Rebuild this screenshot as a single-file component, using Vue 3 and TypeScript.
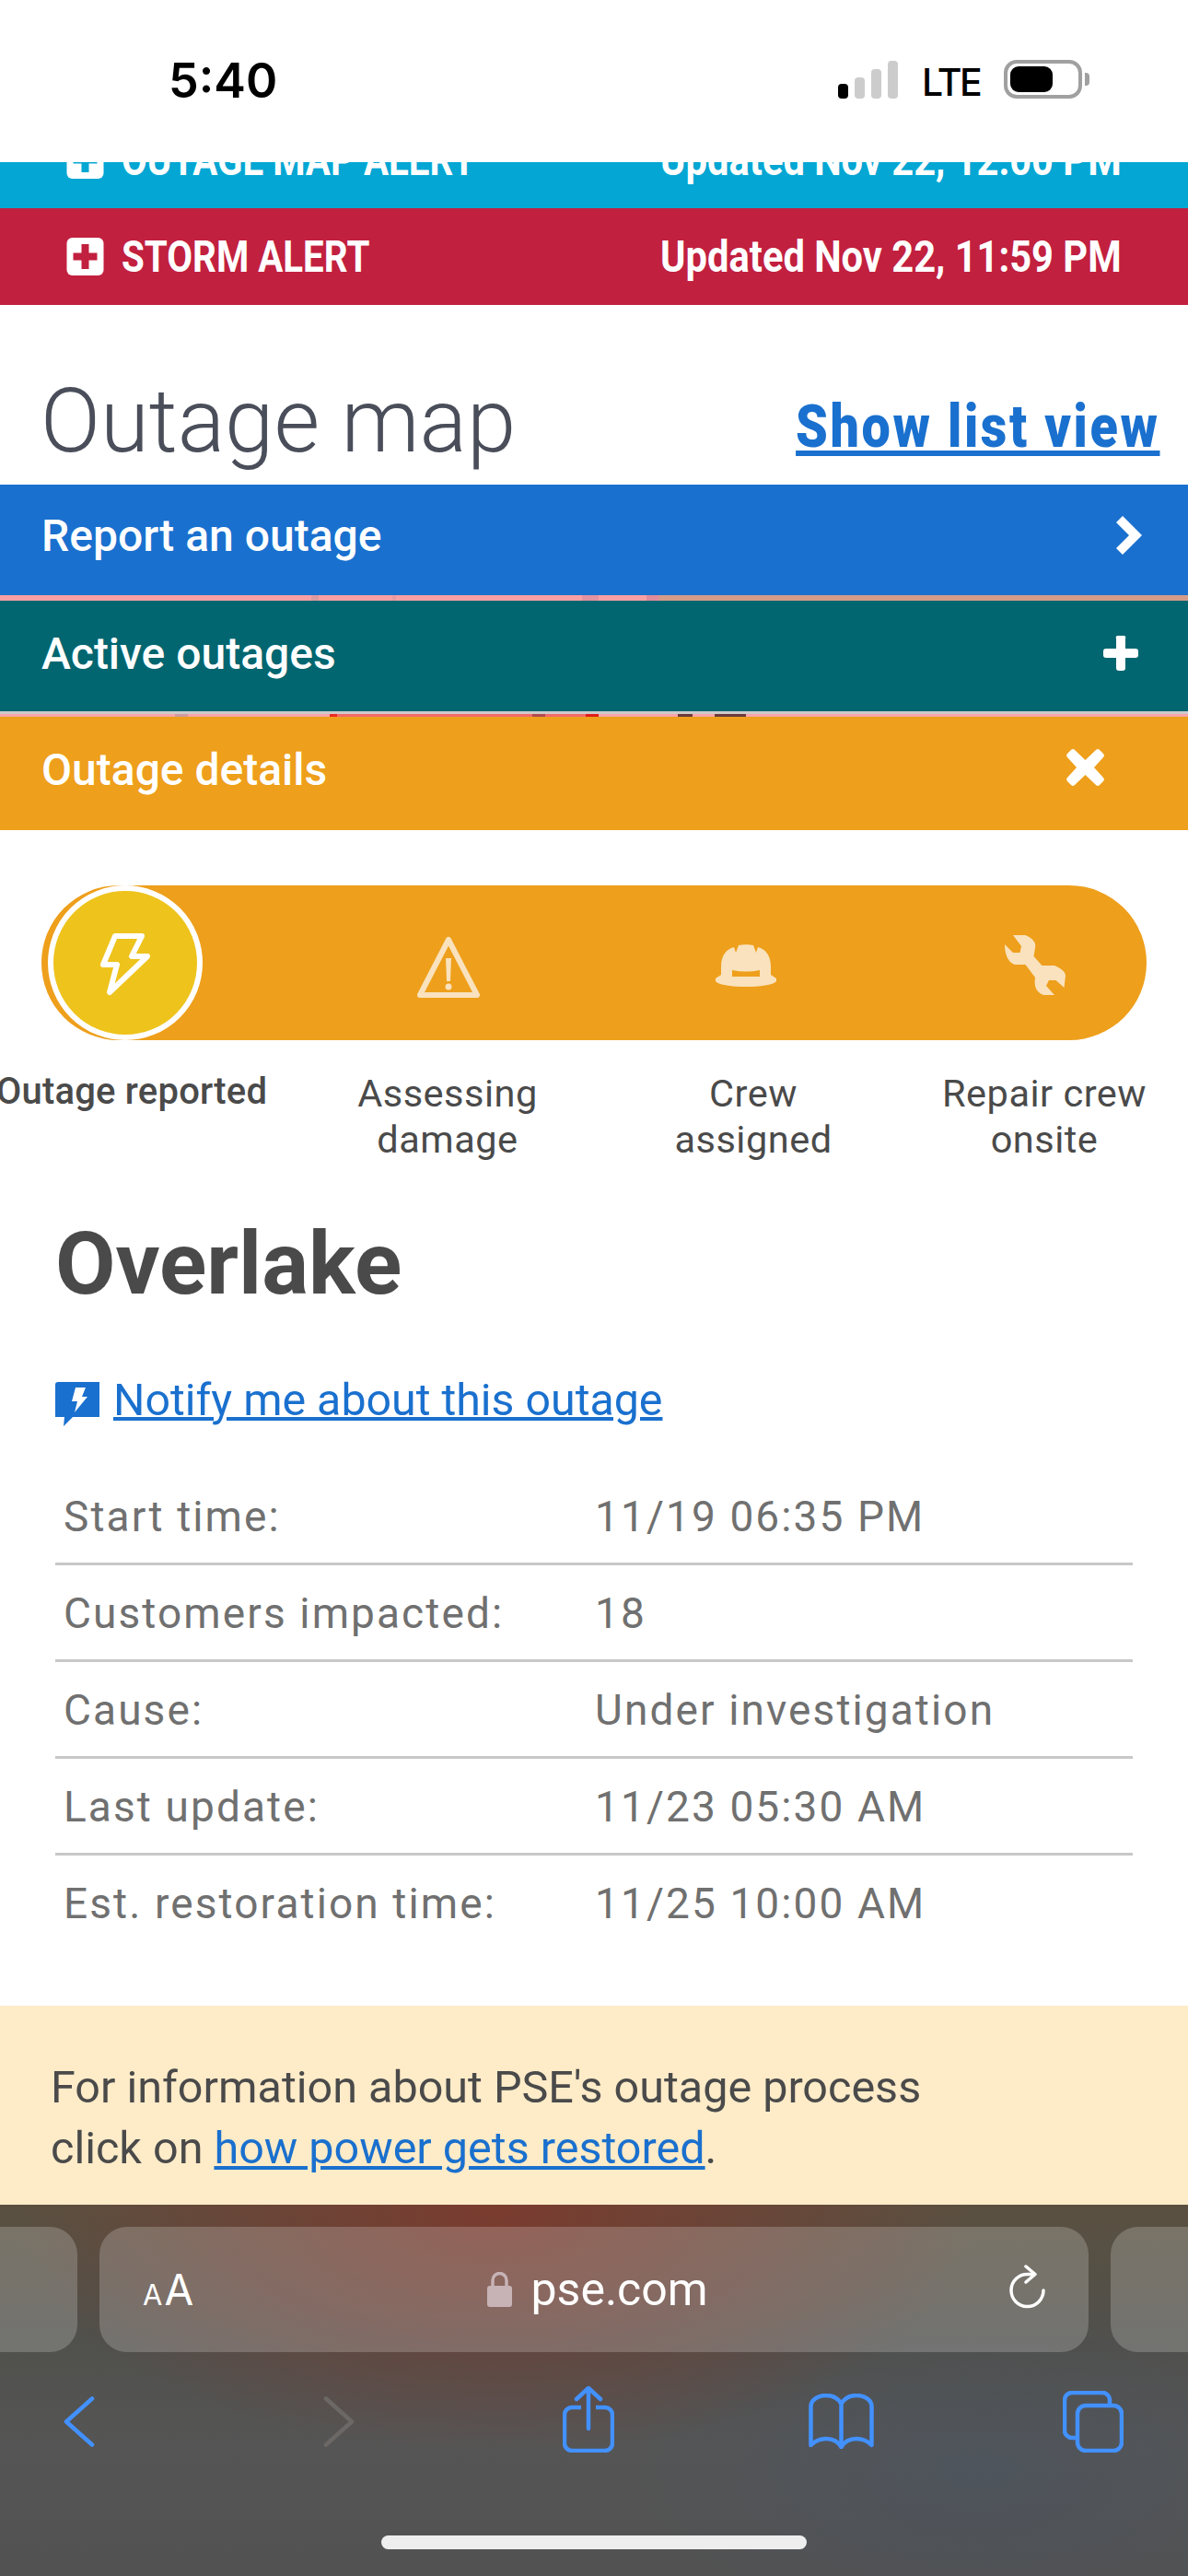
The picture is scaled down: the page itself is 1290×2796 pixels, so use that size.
<template>
  <div class="page">
    <header class="status">
      <span class="time">5:40</span>
      <div class="signal">
        <i class="sig s1 on"></i><i class="sig s2"></i><i class="sig s3"></i><i class="sig s4"></i>
      </div>
      <span class="lte">LTE</span>
      <div class="battery"><i class="charge"></i></div>
      <i class="nub"></i>
    </header>

    <div class="alert-clip">
      <div class="alert cyan">
        <div class="alert-left">
          <svg class="alert-icon" viewBox="0 0 40 41"><rect width="40" height="41" rx="6" fill="#fff" /><path d="M16 7h8v9.500h9v8h-9V34h-8v-9.500H7v-8h9z" fill="#04a6d3" /></svg>
          <span class="alert-name">OUTAGE MAP ALERT</span>
        </div>
        <span class="alert-date">Updated Nov 22, 12:00 PM</span>
      </div>
    </div>
    <div class="alert red">
      <div class="alert-left">
        <svg class="alert-icon" viewBox="0 0 40 41"><rect width="40" height="41" rx="6" fill="#fff" /><path d="M16 7h8v9.500h9v8h-9V34h-8v-9.500H7v-8h9z" fill="#c2203f" /></svg>
        <span class="alert-name">STORM ALERT</span>
      </div>
      <span class="alert-date">Updated Nov 22, 11:59 PM</span>
    </div>

    <div class="title-row">
      <h1 class="title">Outage map</h1>
      <a class="list-link">Show list view</a>
    </div>

    <div class="bar blue">
      <span>Report an outage</span>
      <svg class="chev" viewBox="0 0 28 42"><path d="M7 0l21 21L7 42l-7-7 14-14L0 7z" fill="#fff" /></svg>
    </div>
    <div class="sliver-a"></div>
    <div class="bar teal">
      <span>Active outages</span>
      <svg class="plus" viewBox="0 0 38 38"><path d="M14 3a2 2 0 0 1 2-3h6a2 2 0 0 1 2 3v11h11a3 3 0 0 1 3 3v4a3 3 0 0 1-3 3H24v11a3 3 0 0 1-3 3h-4a3 3 0 0 1-3-3V24H3a3 3 0 0 1-3-3v-4a3 3 0 0 1 3-3h11z" fill="#fff" /></svg>
    </div>
    <div class="sliver-b"><i></i></div>
    <div class="bar amber">
      <span>Outage details</span>
      <svg class="close" viewBox="0 0 41 40"><path d="M9 1l11.500 11L32 1a3 3 0 0 1 4 0l4 4a3 3 0 0 1 0 4L30 20l10 11a3 3 0 0 1 0 4l-4 4a3 3 0 0 1-4 0L20.500 28 9 39a3 3 0 0 1-4 0l-4-4a3 3 0 0 1 0-4l10-11L1 9a3 3 0 0 1 0-4l4-4a3 3 0 0 1 4 0z" fill="#fff" /></svg>
    </div>

    <section class="steps">
      <div class="pill">
        <div class="current">
          <svg class="bolt" viewBox="0 0 54 68"><path d="M16 3h29L34 25h17L10 64l8-30H3z" fill="none" stroke="#fff" stroke-width="6" stroke-linejoin="round" /></svg>
        </div>
        <svg class="step-icon warn" viewBox="0 0 70 68">
          <path d="M35 5l31 60H4z" fill="none" stroke="#f9e2bd" stroke-width="6" stroke-linejoin="round" />
          <path d="M32 25h6l-1 25h-4z" fill="#f9e2bd" />
          <circle cx="35" cy="56" r="3.500" fill="#f9e2bd" />
        </svg>
        <svg class="step-icon helmet" viewBox="0 0 66 46">
          <path fill-rule="evenodd" d="M6 33V24C6 12 12 5 20 3l2 6 3-8c4-1 12-1 16 0l3 8 2-6c8 2 14 9 14 21v9l6 4v3c-3 4-18 6-33 6S3 44 0 40v-3zm12-5v7h30v-7c-10 2-20 2-30 0z" fill="#f9e2bd" />
        </svg>
        <svg class="step-icon wrench" viewBox="0 0 66 66">
          <path d="M9 0h13.500c7.500 3 12 8 10.500 14l-1.500 9 9 10h13.500c7.500 3 12 7 12 11l-1.500 13-9-8h-7.500l-3 6 9 10h-12c-7.500-3-10.500-9-9-19L22.500 32H10.500C3 29 0 20 0 10l9 9h7.500l1.500-7z" fill="#f9e2bd" />
        </svg>
      </div>

      <div class="labels">
        <span class="label first">Outage reported</span>
        <span class="label">Assessing<br />damage</span>
        <span class="label">Crew<br />assigned</span>
        <span class="label">Repair crew<br />onsite</span>
      </div>
    </section>

    <section class="details">
      <h2 class="place">Overlake</h2>
      <div class="notify">
        <svg class="notify-icon" viewBox="0 0 48 48">
          <path d="M3 0h45v38H19L9 48l1-10H0V3a3 3 0 0 1 3-3z" fill="#1a70ce" />
          <path d="M22 6h11l-4 10h6L21 33l3-12h-6z" fill="#fff" />
        </svg>
        <a class="notify-link">Notify me about this outage</a>
      </div>
      <div class="facts">
        <div v-for="row in facts" :key="row.name" class="fact">
          <span class="fact-name">{{ row.name }}</span>
          <span class="fact-value">{{ row.value }}</span>
        </div>
      </div>
    </section>

    <div class="notice">
      For information about PSE's outage process<br />
      click on <a class="notice-link">how power gets restored</a>.
    </div>

    <footer class="browser">
      <div class="tabs">
        <div class="tab side-left"></div>
        <div class="tab address">
          <span class="aa"><small>A</small>A</span>
          <div class="host">
            <svg class="lock" viewBox="0 0 27 38">
              <path d="M6 17V9a7.500 7.500 0 0 1 15 0v8" fill="none" stroke="#c7b3b6" stroke-width="3.500" />
              <rect y="15" width="27" height="23" rx="3" fill="#c7b3b6" />
            </svg>
            <span>pse.com</span>
          </div>
          <svg class="reload" viewBox="0 0 44 54">
            <path d="M37 28a17.500 17.500 0 1 1-17-17.500h7" fill="none" stroke="#fff" stroke-width="3.500" stroke-linecap="round" />
            <path d="M18 2l10 8.500L18 19" fill="none" stroke="#fff" stroke-width="3.500" stroke-linecap="round" stroke-linejoin="round" />
          </svg>
        </div>
        <div class="tab side-right"></div>
      </div>
      <nav class="tools">
        <svg class="tool back" viewBox="0 0 34 55"><path d="M31 2.500L3 27.500l28 25" fill="none" stroke="#4291ff" stroke-width="4.500" stroke-linecap="round" stroke-linejoin="round" /></svg>
        <svg class="tool forward" viewBox="0 0 34 55"><path d="M3 2.500l28 25-28 25" fill="none" stroke="#6b6866" stroke-width="4.500" stroke-linecap="round" stroke-linejoin="round" /></svg>
        <svg class="tool share" viewBox="0 0 56 72">
          <path d="M20 23h-10a8 8 0 0 0-8 8v31a8 8 0 0 0 8 8h36a8 8 0 0 0 8-8V31a8 8 0 0 0-8-8H36" fill="none" stroke="#4291ff" stroke-width="4.500" />
          <path d="M28 46V3M15 14L28 2l13 12" fill="none" stroke="#4291ff" stroke-width="4.500" stroke-linecap="round" stroke-linejoin="round" />
        </svg>
        <svg class="tool book" viewBox="0 0 71 60">
          <path d="M35.500 11C32 5 26 2 19 2 10 2 2.500 7 2.500 14v42c5-5 11-7 16.500-7 7 0 13 3 16.500 9 3.500-6 9.500-9 16.500-9 5.500 0 11.500 2 16.500 7V14c0-7-7.500-12-16.500-12-7 0-13 3-16.500 9zm0 0v47" fill="none" stroke="#4291ff" stroke-width="4.500" stroke-linejoin="round" />
        </svg>
        <svg class="tool pages" viewBox="0 0 66 67">
          <path d="M16 51H10a8 8 0 0 1-8-8V10a8 8 0 0 1 8-8h33a8 8 0 0 1 8 8v6" fill="none" stroke="#4291ff" stroke-width="4.500" />
          <rect x="16" y="16" width="48" height="49" rx="9" fill="none" stroke="#4291ff" stroke-width="4.500" />
        </svg>
      </nav>
      <div class="home"></div>
    </footer>
  </div>
</template>

<script setup lang="ts">
interface Fact {
  name: string
  value: string
}

const facts: Fact[] = [
  { name: 'Start time:', value: '11/19 06:35 PM' },
  { name: 'Customers impacted:', value: '18' },
  { name: 'Cause:', value: 'Under investigation' },
  { name: 'Last update:', value: '11/23 05:30 AM' },
  { name: 'Est. restoration time:', value: '11/25 10:00 AM' }
]
</script>

<style>
html,
body {
  margin: 0;
  background: #fff;
}
</style>

<style scoped>
.page {
  width: 1290px;
  height: 2796px;
  overflow: hidden;
  display: flex;
  flex-direction: column;
  font-family: Roboto, "Liberation Sans", sans-serif;
  background: #fff;
}

/* status bar */
.status {
  height: 176px;
  flex: none;
  display: flex;
  align-items: flex-start;
  padding-left: 183px;
  box-sizing: border-box;
}

.time {
  margin-top: 58px;
  font-family: Inter, sans-serif;
  font-size: 52px;
  line-height: 60px;
  font-weight: 600;
  color: #000;
  width: 727px;
}

.signal {
  display: flex;
  gap: 7px;
  align-items: flex-end;
  height: 41px;
  margin-top: 66px;
}

.sig {
  width: 11px;
  border-radius: 4px;
  background: #ccc;
}

.sig.on {
  background: #000;
}

.s1 { height: 16px; }
.s2 { height: 23px; }
.s3 { height: 32px; }
.s4 { height: 41px; }

.lte {
  margin: 64px 0 0 26px;
  font-family: Inter, sans-serif;
  font-size: 41px;
  line-height: 50px;
  font-weight: 500;
  letter-spacing: -2.500px;
  color: #000;
  width: 62px;
}

.battery {
  margin: 65px 0 0 27px;
  width: 85px;
  height: 42px;
  box-sizing: border-box;
  border: 4px solid #a0a0a0;
  border-radius: 14px;
  padding: 3px;
}

.charge {
  display: block;
  width: 46px;
  height: 28px;
  border-radius: 9px;
  background: #000;
}

.nub {
  margin: 79px 0 0 3px;
  width: 5px;
  height: 14px;
  border-radius: 0 4px 4px 0;
  background: #a0a0a0;
}

/* alerts */
.alert-clip {
  height: 50px;
  flex: none;
  overflow: hidden;
  display: flex;
  flex-direction: column;
  justify-content: flex-end;
}

.alert {
  height: 105px;
  flex: none;
  display: flex;
  align-items: center;
  justify-content: space-between;
  padding: 0 72px 0 72px;
  color: #fff;
  font-weight: 700;
  font-size: 48px;
}

.cyan {
  background: #04a6d3;
}

.red {
  background: #c2203f;
}

.alert-left {
  display: flex;
  align-items: center;
  gap: 19px;
}

.alert-icon {
  width: 41px;
  height: 41px;
  flex: none;
}

.alert-name,
.alert-date {
  display: inline-block;
  white-space: nowrap;
}

/* the site uses a condensed face here */
.alert-name {
  transform: scaleX(0.84);
  transform-origin: left center;
}

.alert-date {
  transform: scaleX(0.868);
  transform-origin: right center;
}

/* heading */
.title-row {
  height: 195px;
  flex: none;
  display: flex;
  align-items: flex-end;
  justify-content: space-between;
  padding: 0 31px 0 44px;
  box-sizing: border-box;
}

.title {
  margin: 0 0 14px;
  font-size: 96px;
  line-height: 110px;
  font-weight: 300;
  color: #4a4e5a;
}

.list-link {
  display: inline-block;
  margin-bottom: 24px;
  font-size: 64px;
  line-height: 76px;
  font-weight: 900;
  letter-spacing: 3px;
  color: #1a70ce;
  text-decoration: underline;
  transform: scaleX(0.87);
  transform-origin: right center;
}

/* bars */
.bar {
  height: 120px;
  flex: none;
  box-sizing: border-box;
  display: flex;
  align-items: center;
  justify-content: space-between;
  padding: 0 50px 8px 45px;
  color: #fff;
  font-size: 48px;
  font-weight: 500;
}

.blue {
  background: #1a70ce;
  padding-bottom: 10px;
}

.teal {
  background: #016670;
  padding-bottom: 6px;
}

.amber {
  height: 123px;
  background: #ee9f1b;
  padding-right: 91px;
}

.chev {
  width: 28px;
  height: 42px;
}

.plus {
  width: 38px;
  height: 38px;
  margin-right: 4px;
}

.close {
  width: 41px;
  height: 40px;
  margin-bottom: 6px;
}

.sliver-a {
  height: 6px;
  flex: none;
  background: linear-gradient(
    to right,
    #f8a0a3 338px,
    #dc9aa0 338px,
    #dc9aa0 346px,
    #f8a0a3 346px,
    #f8a0a3 426px,
    #e89aa0 426px,
    #e89aa0 430px,
    #f8a0a3 430px,
    #f8a0a3 632px,
    #e292a0 632px,
    #e292a0 650px,
    #f8a0a3 650px,
    #f8a0a3 702px,
    #e08c9a 702px,
    #e08c9a 716px,
    #d49c88 716px
  );
}

.sliver-b {
  height: 6px;
  flex: none;
  background: #cfcaca;
  padding-top: 3px;
  box-sizing: border-box;
}

.sliver-b i {
  display: block;
  height: 3px;
  background: linear-gradient(
    to right,
    #f8a5a8 190px,
    #d09aa0 190px,
    #d09aa0 204px,
    #f8a5a8 204px,
    #f8a5a8 358px,
    #ee2a22 358px,
    #ee2a22 366px,
    #f36a6a 366px,
    #f36a6a 578px,
    #b04a50 578px,
    #b04a50 592px,
    #f36a6a 592px,
    #f36a6a 636px,
    #e01e1a 636px,
    #e01e1a 650px,
    #f8a5a8 650px,
    #f8a5a8 736px,
    #6b3a3a 736px,
    #6b3a3a 752px,
    #f8a5a8 752px,
    #f8a5a8 776px,
    #6b3a3a 776px,
    #6b3a3a 810px,
    #f8a5a8 810px
  );
}

/* status steps */
.steps {
  flex: none;
  padding: 60px 45px 0;
}

.pill {
  width: 1200px;
  height: 168px;
  box-sizing: border-box;
  border-radius: 84px;
  background: #ee9f1b;
  padding-left: 7px;
  display: flex;
  align-items: center;
}

.current {
  width: 168px;
  height: 168px;
  flex: none;
  box-sizing: border-box;
  border: 6px solid #fff;
  border-radius: 50%;
  background: #eec31c;
  display: flex;
  align-items: center;
  justify-content: center;
}

.bolt {
  width: 54px;
  height: 68px;
  margin-top: 4px;
}

.step-icon {
  flex: none;
}

.warn {
  width: 70px;
  height: 68px;
  margin-left: 232px;
  margin-top: 8px;
}

.helmet {
  width: 66px;
  height: 46px;
  margin-left: 255px;
  margin-top: 6px;
}

.wrench {
  width: 66px;
  height: 66px;
  margin-left: 248px;
  margin-top: 6px;
}

.labels {
  display: grid;
  grid-template-columns: 296px 390px 274px 358px;
  margin: 33px 0 0 -50px;
  width: 1320px;
}

.label {
  font-size: 41.500px;
  line-height: 50px;
  letter-spacing: 0.500px;
  color: #4a4a4a;
  text-align: center;
  white-space: nowrap;
}

.first {
  font-size: 40px;
  font-weight: 500;
  letter-spacing: 0.2px;
  margin-top: -2px;
}

/* outage details */
.details {
  flex: none;
  padding: 0 60px;
}

.place {
  margin: 55px 0 0 0;
  font-size: 95px;
  line-height: 110px;
  font-weight: 700;
  color: #4a4a4a;
}

.notify {
  display: flex;
  align-items: center;
  gap: 15px;
  margin-top: 63px;
  height: 60px;
}

.notify-icon {
  width: 48px;
  height: 48px;
  flex: none;
  margin-top: 8px;
}

.notify-link {
  font-size: 48.300px;
  line-height: 60px;
  color: #1a70ce;
  text-decoration: underline;
  text-decoration-thickness: 4px;
}

.facts {
  margin-top: 44px;
  width: 1170px;
}

.fact {
  height: 105px;
  box-sizing: border-box;
  display: flex;
  align-items: center;
  padding: 2px 0 0 9px;
  border-bottom: 3px solid #c8c8c8;
  font-size: 46px;
  letter-spacing: 2.100px;
  color: #707070;
}

.fact:last-child {
  border-bottom-color: transparent;
}

.fact-name {
  width: 577px;
  flex: none;
}

/* notice */
.notice {
  height: 216px;
  flex: none;
  margin-top: auto;
  box-sizing: border-box;
  padding: 56px 55px 0;
  background: #feebc8;
  font-size: 48.500px;
  line-height: 66px;
  color: #4a4a4a;
}

.notice-link {
  color: #1a70ce;
  text-decoration: underline;
}

/* browser chrome */
.browser {
  height: 403px;
  flex: none;
  box-sizing: border-box;
  padding-top: 24px;
  display: flex;
  flex-direction: column;
  background:
    radial-gradient(ellipse 520px 260px at 540px 10px, rgba(128, 56, 44, 0.85), rgba(128, 56, 44, 0) 100%),
    radial-gradient(ellipse 380px 180px at 1060px 290px, rgba(72, 84, 100, 0.5), rgba(72, 84, 100, 0) 100%),
    linear-gradient(to bottom, #5a5040 0, #50504c 150px, #555 260px, #525252 100%);
}

.tabs {
  display: flex;
  gap: 24px;
  height: 136px;
  flex: none;
  margin-left: -60px;
  width: 1450px;
}

.tab {
  border-radius: 30px;
  background: rgba(255, 255, 255, 0.2);
  flex: none;
  height: 136px;
}

.side-left {
  width: 144px;
}

.side-right {
  width: 144px;
}

.address {
  width: 1074px;
  box-sizing: border-box;
  display: flex;
  align-items: center;
  justify-content: space-between;
  padding: 0 42px 0 47px;
  color: #fff;
}

.aa {
  font-family: Inter, sans-serif;
  font-size: 46px;
  line-height: 46px;
  margin-top: 6px;
}

.aa small {
  font-size: 31px;
  margin-right: 2px;
}

.host {
  display: flex;
  align-items: center;
  gap: 21px;
  font-size: 50px;
  line-height: 60px;
  margin-right: 9px;
}

.lock {
  width: 27px;
  height: 38px;
}

.reload {
  width: 44px;
  height: 54px;
}

.tools {
  display: flex;
  align-items: center;
  height: 112px;
  flex: none;
  margin-top: 19px;
}

.tool {
  flex: none;
}

.back {
  width: 34px;
  height: 55px;
  margin-left: 69px;
}

.forward {
  width: 34px;
  height: 55px;
  margin-left: 248px;
}

.share {
  width: 56px;
  height: 72px;
  margin-left: 226px;
  margin-bottom: 4px;
}

.book {
  width: 71px;
  height: 60px;
  margin-left: 211px;
}

.pages {
  width: 66px;
  height: 67px;
  margin-left: 205px;
}

.home {
  width: 462px;
  height: 15px;
  flex: none;
  border-radius: 8px;
  background: #eee;
  margin: 68px 0 0 414px;
}
</style>
